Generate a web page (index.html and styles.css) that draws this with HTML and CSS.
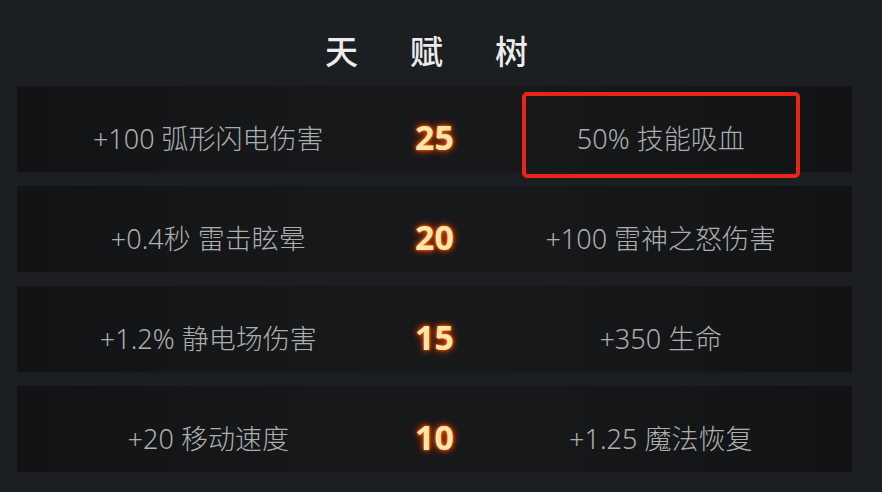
FILE: index.html
```html
<!DOCTYPE html>
<html lang="zh-CN">
<head>
    <meta charset="UTF-8">
    <meta name="viewport" content="width=device-width, initial-scale=1.0">
    <title>天赋树</title>
    <link rel="stylesheet" href="styles.css">
</head>
<body>
    <div class="tree">
        <h1 class="title">天赋树</h1>

        <div class="row">
            <div class="cell">+100 弧形闪电伤害</div>
            <div class="level">25</div>
            <div class="cell picked">50% 技能吸血</div>
        </div>
        <div class="row">
            <div class="cell">+0.4秒 雷击眩晕</div>
            <div class="level">20</div>
            <div class="cell">+100 雷神之怒伤害</div>
        </div>
        <div class="row">
            <div class="cell">+1.2% 静电场伤害</div>
            <div class="level">15</div>
            <div class="cell">+350 生命</div>
        </div>
        <div class="row">
            <div class="cell">+20 移动速度</div>
            <div class="level">10</div>
            <div class="cell">+1.25 魔法恢复</div>
        </div>
    </div>
</body>
</html>
```

FILE: styles.css
```css
body {
    margin: 0;
    background: #1c1f22;
    font-family: "Noto Sans", "Noto Sans CJK SC", sans-serif;
}
.tree {
    padding: 0 30px 0 17px;
    height: 492px;
    box-sizing: border-box;
}
.title {
    margin: 0;
    height: 86px;
    display: flex;
    justify-content: center;
    align-items: center;
    padding: 14px 0 0 36px;
    box-sizing: border-box;
    font-size: 33px;
    font-weight: 500;
    letter-spacing: 52px;
    color: #ececec;
}
.row {
    display: grid;
    grid-template-columns: 1fr 70px 1fr;
    height: 88px;
    margin-bottom: 12px;
    background: linear-gradient(90deg, #121314 0%, #17191b 45%, #17191b 55%, #121314 100%);
    box-shadow: inset 0 -2px 0 #1a1c1f;
}
.cell,
.level {
    display: flex;
    justify-content: center;
    align-items: center;
    padding-top: 14px;
}
.cell {
    position: relative;
    font-size: 27px;
    font-weight: 300;
    color: #acaeb0;
}
.level {
    font-size: 34px;
    font-weight: bold;
    color: #ffe6a8;
    text-shadow: 0 0 3px #ff6a10, 0 0 6px #d84000, 0 0 10px #9a2800;
}
.picked::after {
    content: "";
    position: absolute;
    left: 52px;
    right: 52px;
    top: 6px;
    bottom: -4px;
    border: 4px solid #ea2418;
    border-radius: 5px;
}
```
